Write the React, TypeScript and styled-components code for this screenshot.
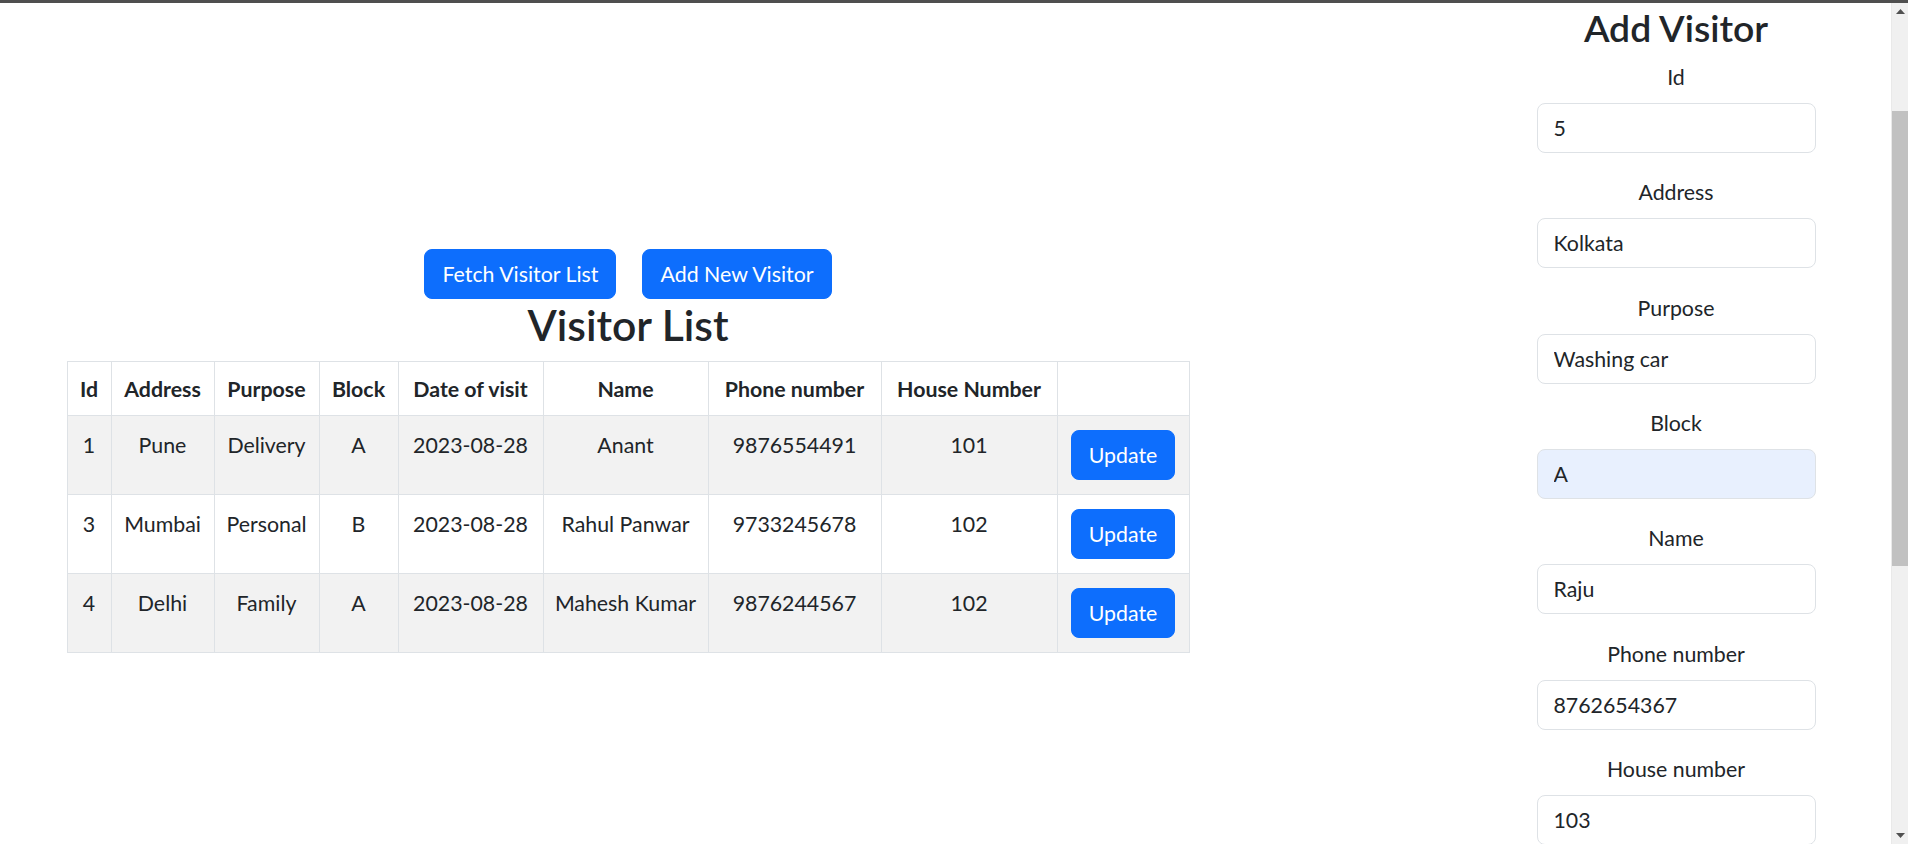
import React from "react";
import styled, { createGlobalStyle } from "styled-components";

const GlobalStyle = createGlobalStyle`
  html, body {
    margin: 0;
    padding: 0;
    background: #ffffff;
    overflow: hidden;
  }
  body {
    font-family: Lato, "Open Sans", "Liberation Sans", sans-serif;
    font-size: 21.33px;
    line-height: 32px;
    color: #212529;
  }
  * { box-sizing: border-box; }
`;

const Screen = styled.div`
  width: 1908px;
  height: 844px;
  display: flex;
  flex-direction: column;
  overflow: hidden;
`;

const TopBar = styled.div`
  height: 3px;
  flex: 0 0 3px;
  background: #4f4f4f;
`;

const Viewport = styled.div`
  flex: 1;
  min-height: 0;
  display: flex;
`;

const Page = styled.main`
  flex: 1;
  min-width: 0;
  display: flex;
  align-items: flex-start;
  padding-left: 67px;
  overflow: hidden;
`;

const ListPane = styled.section`
  width: 1122px;
  flex: 0 0 1122px;
  padding-top: 246px;
  display: flex;
  flex-direction: column;
  align-items: center;
`;

const ButtonBar = styled.div`
  display: flex;
  gap: 26px;
`;

const PrimaryButton = styled.button<{ $block?: boolean }>`
  display: ${(p) => (p.$block ? "block" : "inline-block")};
  margin: ${(p) => (p.$block ? "0 auto" : "0")};
  height: 50px;
  padding: 0 17px;
  font-family: inherit;
  font-size: 21.33px;
  line-height: 32px;
  font-weight: 400;
  color: #ffffff;
  background: #0d6efd;
  border: 1px solid #0d6efd;
  border-radius: 8px;
  cursor: pointer;
  white-space: nowrap;
`;

const ListTitle = styled.h2`
  margin: 0 0 10.67px;
  font-size: 42.67px;
  line-height: 51.2px;
  font-weight: 600;
  color: #212529;
`;

const Table = styled.table`
  width: 1122px;
  table-layout: fixed;
  border-collapse: collapse;
  border: 1px solid #dee2e6;
  color: #212529;
`;

const Col = styled.col<{ $w: number }>`
  width: ${(p) => p.$w}px;
`;

const HeadCell = styled.th`
  border: 1px solid #dee2e6;
  padding: 10.67px 4px;
  line-height: 32px;
  font-weight: 700;
  text-align: center;
  white-space: nowrap;
  vertical-align: top;
  background: #ffffff;
`;

const BodyRow = styled.tr<{ $striped: boolean }>`
  background: ${(p) => (p.$striped ? "#f2f2f2" : "#ffffff")};
`;

const Cell = styled.td`
  border: 1px solid #dee2e6;
  padding: 13px 4px 9px;
  line-height: 32px;
  text-align: center;
  vertical-align: top;
  white-space: nowrap;
`;

const ActionCell = styled.td`
  border: 1px solid #dee2e6;
  padding: 14px 8px;
  vertical-align: middle;
  text-align: center;
`;

const FormPane = styled.aside`
  margin-left: 272px;
  width: 430px;
  flex: 0 0 430px;
  padding-top: 3px;
  display: flex;
  flex-direction: column;
  align-items: center;
`;

const FormTitle = styled.h3`
  margin: 0 0 10px;
  font-size: 37.33px;
  line-height: 44.8px;
  font-weight: 600;
  color: #212529;
`;

const FormGroup = styled.div`
  display: flex;
  flex-direction: column;
  align-items: center;
  margin-bottom: 23.4px;
`;

const Label = styled.label`
  display: block;
  margin-bottom: 10px;
  line-height: 32px;
  text-align: center;
`;

const Input = styled.input<{ $autofill?: boolean }>`
  display: block;
  width: 279px;
  height: 50px;
  padding: 0 16px;
  font-family: inherit;
  font-size: 21.33px;
  color: #212529;
  background: ${(p) => (p.$autofill ? "#e8f0fe" : "#ffffff")};
  border: 1px solid #dee2e6;
  border-radius: 8px;
  outline: none;
`;

const ScrollBar = styled.div`
  width: 17px;
  flex: 0 0 17px;
  display: flex;
  flex-direction: column;
  background: #f0f0f0;
  border-left: 1px solid #e9e9e9;
`;

const ArrowBox = styled.div`
  height: 17px;
  flex: 0 0 17px;
  display: flex;
  align-items: center;
  justify-content: center;
`;

const ScrollTrack = styled.div`
  flex: 1;
  min-height: 0;
`;

const Thumb = styled.div`
  margin-top: 91px;
  height: 455px;
  background: #c1c1c1;
`;

type Visitor = {
  id: string;
  address: string;
  purpose: string;
  block: string;
  date: string;
  name: string;
  phone: string;
  house: string;
};

const visitors: Visitor[] = [
  { id: "1", address: "Pune", purpose: "Delivery", block: "A", date: "2023-08-28", name: "Anant", phone: "9876554491", house: "101" },
  { id: "3", address: "Mumbai", purpose: "Personal", block: "B", date: "2023-08-28", name: "Rahul Panwar", phone: "9733245678", house: "102" },
  { id: "4", address: "Delhi", purpose: "Family", block: "A", date: "2023-08-28", name: "Mahesh Kumar", phone: "9876244567", house: "102" },
];

const headers = ["Id", "Address", "Purpose", "Block", "Date of visit", "Name", "Phone number", "House Number", ""];
const widths = [44, 103, 105, 79, 145, 165, 173, 176, 132];

const formFields: { label: string; value: string; autofill?: boolean }[] = [
  { label: "Id", value: "5" },
  { label: "Address", value: "Kolkata" },
  { label: "Purpose", value: "Washing car" },
  { label: "Block", value: "A", autofill: true },
  { label: "Name", value: "Raju" },
  { label: "Phone number", value: "8762654367" },
  { label: "House number", value: "103" },
];

const Arrow = ({ up }: { up: boolean }) => (
  <svg width="9" height="5" viewBox="0 0 9 5">
    {up ? <polygon points="0,5 4.5,0 9,5" fill="#505050" /> : <polygon points="0,0 4.5,5 9,0" fill="#505050" />}
  </svg>
);

export default function App() {
  return (
    <>
      <GlobalStyle />
      <Screen>
        <TopBar />
        <Viewport>
          <Page>
            <ListPane>
              <ButtonBar>
                <PrimaryButton>Fetch Visitor List</PrimaryButton>
                <PrimaryButton>Add New Visitor</PrimaryButton>
              </ButtonBar>
              <ListTitle>Visitor List</ListTitle>
              <Table>
                <colgroup>
                  {widths.map((w, i) => (
                    <Col key={i} $w={w} />
                  ))}
                </colgroup>
                <thead>
                  <tr>
                    {headers.map((h, i) => (
                      <HeadCell key={i}>{h}</HeadCell>
                    ))}
                  </tr>
                </thead>
                <tbody>
                  {visitors.map((v, i) => (
                    <BodyRow key={v.id} $striped={i % 2 === 0}>
                      <Cell>{v.id}</Cell>
                      <Cell>{v.address}</Cell>
                      <Cell>{v.purpose}</Cell>
                      <Cell>{v.block}</Cell>
                      <Cell>{v.date}</Cell>
                      <Cell>{v.name}</Cell>
                      <Cell>{v.phone}</Cell>
                      <Cell>{v.house}</Cell>
                      <ActionCell>
                        <PrimaryButton $block>Update</PrimaryButton>
                      </ActionCell>
                    </BodyRow>
                  ))}
                </tbody>
              </Table>
            </ListPane>
            <FormPane>
              <FormTitle>Add Visitor</FormTitle>
              {formFields.map((f) => (
                <FormGroup key={f.label}>
                  <Label>{f.label}</Label>
                  <Input value={f.value} readOnly $autofill={f.autofill} />
                </FormGroup>
              ))}
            </FormPane>
          </Page>
          <ScrollBar>
            <ArrowBox>
              <Arrow up />
            </ArrowBox>
            <ScrollTrack>
              <Thumb />
            </ScrollTrack>
            <ArrowBox>
              <Arrow up={false} />
            </ArrowBox>
          </ScrollBar>
        </Viewport>
      </Screen>
    </>
  );
}
